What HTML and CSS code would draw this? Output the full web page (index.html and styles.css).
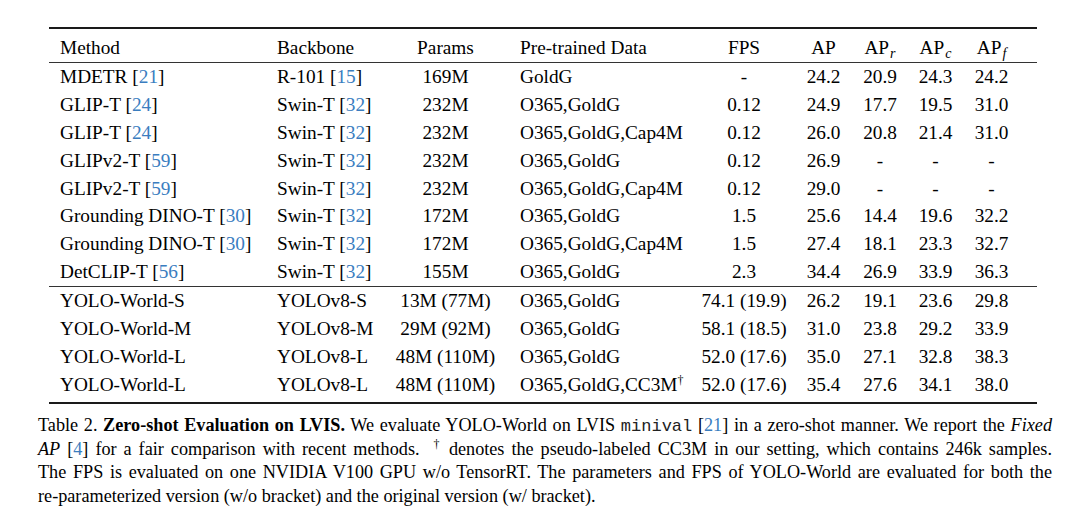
FILE: index.html
```html
<!DOCTYPE html>
<html lang="en">
<head>
<meta charset="utf-8">
<title>Table 2. Zero-shot Evaluation on LVIS</title>
<link rel="stylesheet" href="styles.css">
</head>
<body>
<div class="page">
  <table class="results">
    <colgroup>
      <col class="w-method">
      <col class="w-backbone">
      <col class="w-params">
      <col class="w-data">
      <col class="w-fps">
      <col class="w-ap">
      <col class="w-apr">
      <col class="w-apc">
      <col class="w-apf">
    </colgroup>
    <thead>
      <tr>
        <th class="l first">Method</th>
        <th class="l">Backbone</th>
        <th>Params</th>
        <th class="l data">Pre-trained Data</th>
        <th>FPS</th>
        <th>AP</th>
        <th>AP<sub>r</sub></th>
        <th>AP<sub>c</sub></th>
        <th class="last">AP<sub>f</sub></th>
      </tr>
    </thead>
    <tbody class="baselines">
      <tr><td class="l first">MDETR [<span class="cite">21</span>]</td><td class="l">R-101 [<span class="cite">15</span>]</td><td>169M</td><td class="l data">GoldG</td><td>-</td><td>24.2</td><td>20.9</td><td>24.3</td><td class="last">24.2</td></tr>
      <tr><td class="l first">GLIP-T [<span class="cite">24</span>]</td><td class="l">Swin-T [<span class="cite">32</span>]</td><td>232M</td><td class="l data">O365,GoldG</td><td>0.12</td><td>24.9</td><td>17.7</td><td>19.5</td><td class="last">31.0</td></tr>
      <tr><td class="l first">GLIP-T [<span class="cite">24</span>]</td><td class="l">Swin-T [<span class="cite">32</span>]</td><td>232M</td><td class="l data">O365,GoldG,Cap4M</td><td>0.12</td><td>26.0</td><td>20.8</td><td>21.4</td><td class="last">31.0</td></tr>
      <tr><td class="l first">GLIPv2-T [<span class="cite">59</span>]</td><td class="l">Swin-T [<span class="cite">32</span>]</td><td>232M</td><td class="l data">O365,GoldG</td><td>0.12</td><td>26.9</td><td>-</td><td>-</td><td class="last">-</td></tr>
      <tr><td class="l first">GLIPv2-T [<span class="cite">59</span>]</td><td class="l">Swin-T [<span class="cite">32</span>]</td><td>232M</td><td class="l data">O365,GoldG,Cap4M</td><td>0.12</td><td>29.0</td><td>-</td><td>-</td><td class="last">-</td></tr>
      <tr><td class="l first">Grounding DINO-T [<span class="cite">30</span>]</td><td class="l">Swin-T [<span class="cite">32</span>]</td><td>172M</td><td class="l data">O365,GoldG</td><td>1.5</td><td>25.6</td><td>14.4</td><td>19.6</td><td class="last">32.2</td></tr>
      <tr><td class="l first">Grounding DINO-T [<span class="cite">30</span>]</td><td class="l">Swin-T [<span class="cite">32</span>]</td><td>172M</td><td class="l data">O365,GoldG,Cap4M</td><td>1.5</td><td>27.4</td><td>18.1</td><td>23.3</td><td class="last">32.7</td></tr>
      <tr><td class="l first">DetCLIP-T [<span class="cite">56</span>]</td><td class="l">Swin-T [<span class="cite">32</span>]</td><td>155M</td><td class="l data">O365,GoldG</td><td>2.3</td><td>34.4</td><td>26.9</td><td>33.9</td><td class="last">36.3</td></tr>
    </tbody>
    <tbody class="ours">
      <tr><td class="l first">YOLO-World-S</td><td class="l">YOLOv8-S</td><td>13M (77M)</td><td class="l data">O365,GoldG</td><td>74.1 (19.9)</td><td>26.2</td><td>19.1</td><td>23.6</td><td class="last">29.8</td></tr>
      <tr><td class="l first">YOLO-World-M</td><td class="l">YOLOv8-M</td><td>29M (92M)</td><td class="l data">O365,GoldG</td><td>58.1 (18.5)</td><td>31.0</td><td>23.8</td><td>29.2</td><td class="last">33.9</td></tr>
      <tr><td class="l first">YOLO-World-L</td><td class="l">YOLOv8-L</td><td>48M (110M)</td><td class="l data">O365,GoldG</td><td>52.0 (17.6)</td><td>35.0</td><td>27.1</td><td>32.8</td><td class="last">38.3</td></tr>
      <tr><td class="l first">YOLO-World-L</td><td class="l">YOLOv8-L</td><td>48M (110M)</td><td class="l data">O365,GoldG,CC3M<sup class="dag">†</sup></td><td>52.0 (17.6)</td><td>35.4</td><td>27.6</td><td>34.1</td><td class="last">38.0</td></tr>
    </tbody>
  </table>

  <p class="caption">
    <span class="line">Table 2. <b>Zero-shot Evaluation on LVIS.</b> We evaluate YOLO-World on LVIS <code>minival</code> [<span class="cite">21</span>] in a zero-shot manner. We report the <i>Fixed</i></span>
    <span class="line"><i>AP</i> [<span class="cite">4</span>] for a fair comparison with recent methods. &nbsp;<sup class="dag">†</sup> denotes the pseudo-labeled CC3M in our setting, which contains 246k samples.</span>
    <span class="line">The FPS is evaluated on one NVIDIA V100 GPU w/o TensorRT. The parameters and FPS of YOLO-World are evaluated for both the</span>
    <span class="line">re-parameterized version (w/o bracket) and the original version (w/ bracket).</span>
  </p>
</div>
</body>
</html>
```

FILE: styles.css
```css
html, body {
  margin: 0;
  padding: 0;
  background: #ffffff;
}

body {
  color: #000000;
  font-family: "Liberation Serif", "Times New Roman", serif;
}

.page {
  padding-top: 27px;
}

/* ---------- results table ---------- */

.results {
  margin-left: 49px;
  width: 988px;
  table-layout: fixed;
  border-collapse: collapse;
  font-size: 19.3px;
}

.w-method   { width: 216px; }
.w-backbone { width: 119px; }
.w-params   { width: 123px; }
.w-data     { width: 186px; }
.w-fps      { width: 102px; }
.w-ap       { width: 57px; }
.w-apr      { width: 56px; }
.w-apc      { width: 55px; }
.w-apf      { width: 74px; }

.results th,
.results td {
  padding: 0;
  height: 27.9px;
  line-height: 27.9px;
  font-weight: normal;
  text-align: center;
  white-space: nowrap;
  vertical-align: top;
}

.results .l {
  text-align: left;
  text-indent: 12px;
}

.results .l.first {
  text-indent: 11px;
}

.results .l.data {
  text-indent: 13px;
}

.results .last {
  text-indent: -17px;
}

.results thead tr {
  border-top: 2px solid #1a1a1a;
  border-bottom: 1px solid #333333;
}

.results thead th {
  padding-top: 5px;
}

.results .ours tr:first-child {
  border-top: 1px solid #333333;
}

.results .ours tr:last-child {
  border-bottom: 2px solid #1a1a1a;
}

.results .ours tr:last-child td {
  padding-bottom: 3px;
}

.results sub {
  font-size: 14px;
  font-style: italic;
  line-height: 0;
  vertical-align: -4px;
  margin-left: 1px;
}

.cite {
  color: #3a7dbf;
}

.dag {
  font-size: 12px;
  line-height: 0;
  vertical-align: 7px;
}

/* ---------- caption ---------- */

.caption {
  margin: 10px 0 0 38px;
  width: 1014px;
  font-size: 18.2px;
  line-height: 23.3px;
}

.caption .line {
  display: block;
  text-align: justify;
  text-align-last: justify;
}

.caption .line:last-child {
  text-align-last: left;
}

.caption b {
  font-weight: bold;
}

.caption code {
  font-family: "Liberation Mono", "Courier New", monospace;
  font-size: 17px;
  font-weight: normal;
  color: #222222;
}
```
